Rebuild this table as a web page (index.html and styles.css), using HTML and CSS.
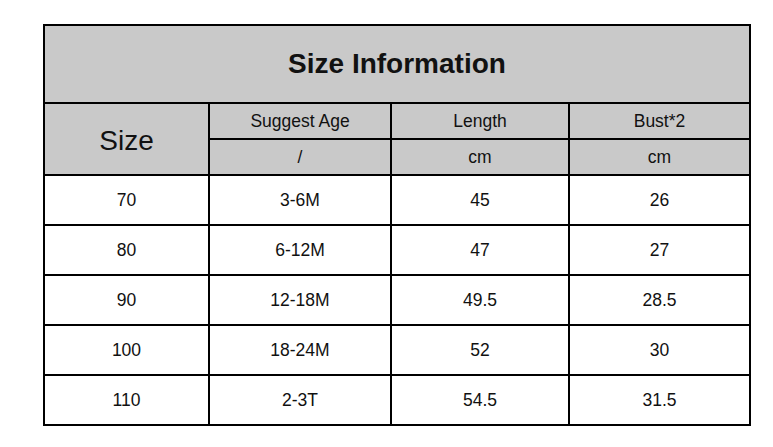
FILE: index.html
```html
<!DOCTYPE html>
<html>
<head>
<meta charset="utf-8">
<link rel="stylesheet" href="styles.css">
</head>
<body>
<div class="sheet">
  <div class="cell head title">Size Information</div>
  <div class="cell head size">Size</div>
  <div class="cell head">Suggest Age</div>
  <div class="cell head">Length</div>
  <div class="cell head">Bust*2</div>
  <div class="cell head">/</div>
  <div class="cell head">cm</div>
  <div class="cell head">cm</div>

  <div class="cell">70</div><div class="cell">3-6M</div><div class="cell">45</div><div class="cell">26</div>
  <div class="cell">80</div><div class="cell">6-12M</div><div class="cell">47</div><div class="cell">27</div>
  <div class="cell">90</div><div class="cell">12-18M</div><div class="cell">49.5</div><div class="cell">28.5</div>
  <div class="cell">100</div><div class="cell">18-24M</div><div class="cell">52</div><div class="cell">30</div>
  <div class="cell">110</div><div class="cell">2-3T</div><div class="cell">54.5</div><div class="cell">31.5</div>
</div>
</body>
</html>
```

FILE: styles.css
```css
html, body {
  margin: 0;
  padding: 0;
  background: #ffffff;
}

body {
  font-family: "Liberation Sans", Arial, sans-serif;
  color: #111111;
}

.sheet {
  margin: 24px 0 0 43px;
  width: 708px;
  box-sizing: border-box;
  display: grid;
  grid-template-columns: 163px 180px 176px 179px;
  grid-template-rows: 76px 34px 34px repeat(5, 48px);
  gap: 2px;
  padding: 2px;
  background: #000000;
}

.cell {
  background: #ffffff;
  display: flex;
  align-items: center;
  justify-content: center;
  font-size: 17.5px;
}

.head {
  background: #c9c9c9;
}

.title {
  grid-column: 1 / 5;
  font-size: 28px;
  font-weight: bold;
}

.size {
  grid-row: 2 / 4;
  font-size: 28px;
  padding-top: 3px;
}
```
